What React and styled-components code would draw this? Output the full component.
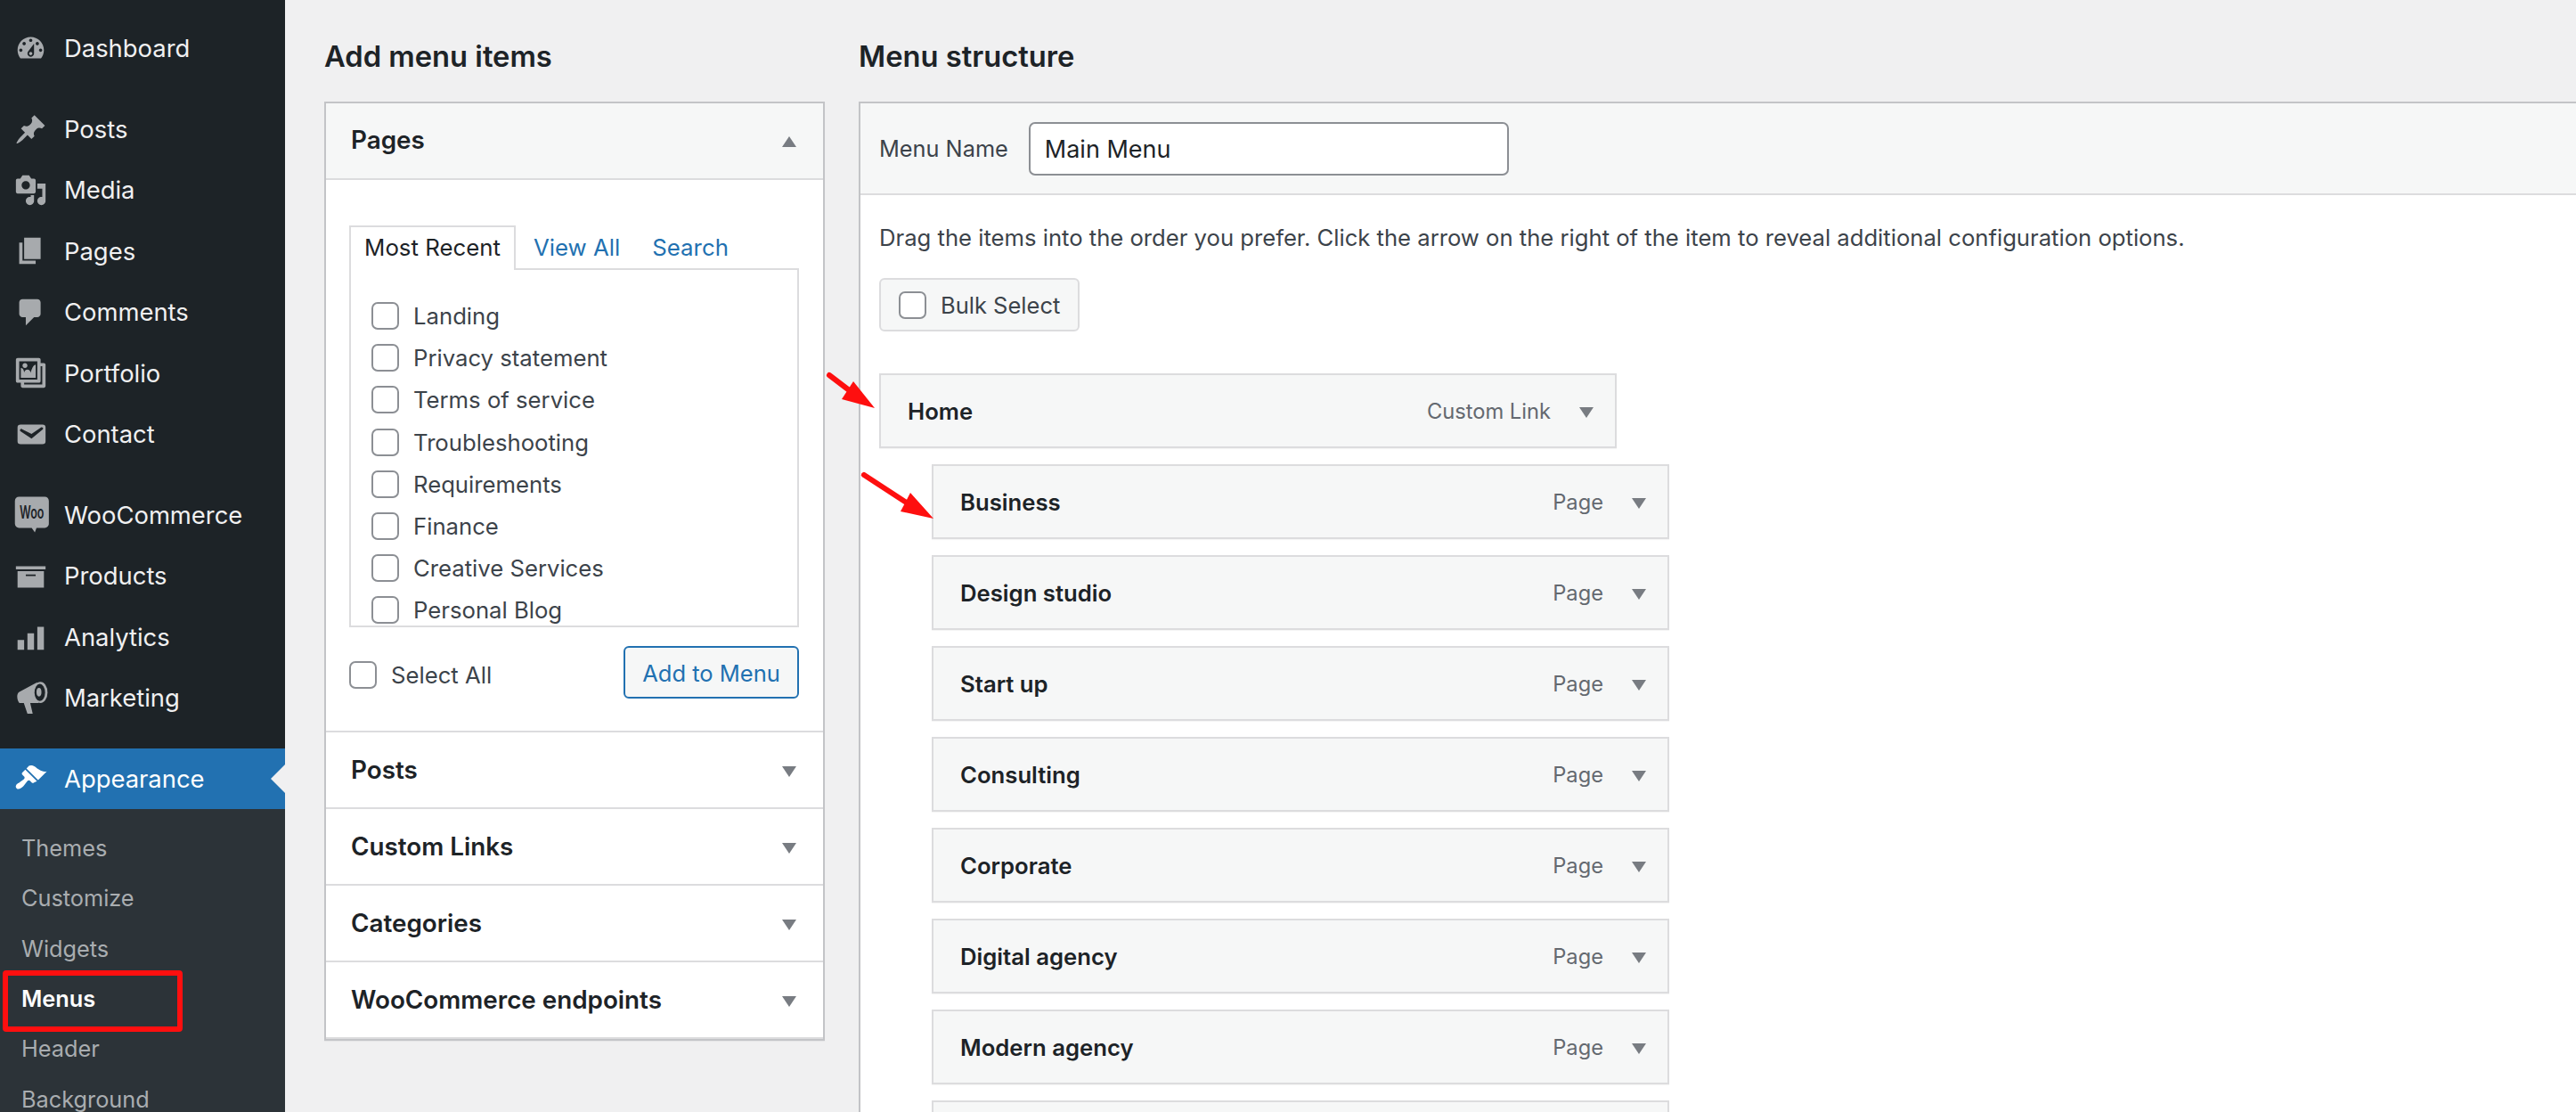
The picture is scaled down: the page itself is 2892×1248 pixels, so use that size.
import React from 'react';
import styled, { createGlobalStyle } from 'styled-components';

const GlobalStyle = createGlobalStyle`
  html, body {
    margin: 0;
    padding: 0;
    background: #f0f0f1;
  }
  body {
    font-family: Inter, 'Noto Sans', 'Liberation Sans', sans-serif;
    color: #3c434a;
  }
  * {
    box-sizing: border-box;
  }
`;

const Page = styled.div`
  display: flex;
  height: 1248px;
  overflow: hidden;
  position: relative;
`;

const Sidebar = styled.nav`
  background: #1d2327;
  flex: none;
  padding-top: 20px;
  width: 320px;
`;

const MenuGroup = styled.div`
  margin-bottom: 22.5px;
`;

const MenuItem = styled.div`
  align-items: center;
  background: ${props => (props.$active ? '#2271b1' : 'transparent')};
  color: ${props => (props.$active ? '#fff' : '#f0f0f1')};
  display: flex;
  font-size: 27.4px;
  gap: 19px;
  height: 68.4px;
  padding-left: 16px;
  position: relative;
`;

const Notch = styled.span`
  border-bottom: 16px solid transparent;
  border-right: 16px solid #f0f0f1;
  border-top: 16px solid transparent;
  position: absolute;
  right: 0;
  top: 18px;
`;

const IconSvg = styled.svg`
  fill: ${props => (props.$active ? '#fff' : '#a7aaad')};
  flex: none;
  height: 37px;
  overflow: visible;
  width: 37px;
`;

const WooLabel = styled.text`
  fill: #1d2327;
  font-family: Inter, sans-serif;
  font-size: 10.5px;
  font-weight: 600;
`;

const IconHole = styled.ellipse`
  fill: #1d2327;
`;

const SubMenu = styled.div`
  background: #2c3338;
  height: 400px;
  padding-top: 15px;
`;

const SubItem = styled.div`
  align-items: center;
  color: ${props => (props.$current ? '#fff' : '#a9adb0')};
  display: flex;
  font-size: 25.3px;
  font-weight: ${props => (props.$current ? 600 : 400)};
  height: 56.4px;
  padding-left: 24px;
`;

const Main = styled.main`
  display: flex;
  flex: 1;
  gap: 38px;
  min-width: 0;
  padding: 41px 0 0 44px;
`;

const LeftColumn = styled.section`
  flex: none;
  width: 562px;
`;

const RightColumn = styled.section`
  flex: 1;
  min-width: 0;
`;

const Heading = styled.h2`
  color: #1d2327;
  font-size: 32.7px;
  font-weight: 600;
  line-height: 44px;
  margin: 0 0 29px;
`;

const Panel = styled.div`
  background: #fff;
  border: 2px solid #c3c4c7;
  box-shadow: 0 1px 1px rgba(0, 0, 0, 0.04);
`;

const AccordionHead = styled.div`
  align-items: center;
  background: ${props => (props.$open ? '#f6f7f7' : '#fff')};
  border-bottom: 2px solid #dcdcde;
  color: #1d2327;
  display: flex;
  font-size: 27.8px;
  font-weight: 600;
  height: 86px;
  justify-content: space-between;
  padding: 0 30px ${props => (props.$open ? '2px' : '0')} 28px;
`;

const Triangle = styled.span`
  border-left: 8px solid transparent;
  border-right: 8px solid transparent;
  ${props => (props.$up ? 'border-bottom' : 'border-top')}: 12px solid #787c82;
  flex: none;
  height: 0;
  margin-top: ${props => (props.$up ? '3px' : '4px')};
  width: 0;
`;

const AccordionBody = styled.div`
  border-bottom: 2px solid #dcdcde;
  height: 620px;
  padding: 51px 27px 0 26px;
`;

const Tabs = styled.div`
  display: flex;
  height: 48px;
  position: relative;
  z-index: 1;
`;

const ActiveTab = styled.div`
  align-items: center;
  background: #fff;
  border: 2px solid #dcdcde;
  border-bottom: none;
  color: #1d2327;
  display: flex;
  font-size: 25.8px;
  height: 50px;
  justify-content: center;
  margin-right: 20px;
  padding-bottom: 3px;
  width: 187px;
`;

const TabLink = styled.a`
  align-items: center;
  color: #2271b1;
  display: flex;
  font-size: 25.8px;
  height: 48px;
  margin-right: 36px;
`;

const ListBox = styled.div`
  border: 2px solid #dcdcde;
  height: 403px;
  overflow: hidden;
  padding: 28px 0 0 23px;
`;

const Row = styled.label`
  align-items: center;
  display: flex;
  font-size: 25.7px;
  gap: 16px;
  height: 47.2px;
`;

const Check = styled.span`
  background: #fff;
  border: 2px solid #8c8f94;
  border-radius: 7px;
  display: block;
  flex: none;
  height: 31px;
  width: 31px;
`;

const Footer = styled.div`
  align-items: center;
  display: flex;
  justify-content: space-between;
  margin-top: 21px;
`;

const SelectAll = styled(Row)`
  padding-top: 6px;
`;

const AddButton = styled.button`
  background: #f6f7f7;
  border: 2px solid #2271b1;
  border-radius: 6px;
  color: #2271b1;
  font-family: inherit;
  font-size: 25.5px;
  height: 59px;
  padding: 2px 0 0;
  width: 197px;
`;

const StructurePanel = styled(Panel)`
  border-right: none;
  height: 1300px;
`;

const NameBar = styled.div`
  align-items: center;
  background: #f6f7f7;
  border-bottom: 2px solid #dcdcde;
  display: flex;
  font-size: 25.3px;
  gap: 23px;
  height: 103px;
  padding-left: 21px;
`;

const NameInput = styled.input`
  background: #fff;
  border: 2px solid #8c8f94;
  border-radius: 7px;
  color: #1d2327;
  font-family: inherit;
  font-size: 27px;
  height: 60px;
  padding: 2px 16px 0;
  width: 539px;
`;

const StructureBody = styled.div`
  padding: 31px 0 0 21px;
`;

const Hint = styled.p`
  font-size: 25.65px;
  line-height: 34px;
  margin: 0 0 28px;
`;

const BulkButton = styled.div`
  align-items: center;
  background: #f6f7f7;
  border: 2px solid #dcdcde;
  border-radius: 6px;
  display: flex;
  font-size: 25.5px;
  gap: 16px;
  height: 60px;
  margin-bottom: 47px;
  padding-left: 20px;
  width: 225px;
`;

const ItemBar = styled.div`
  align-items: center;
  background: #f6f7f7;
  border: 2px solid #dcdcde;
  box-shadow: 0 1px 1px rgba(0, 0, 0, 0.04);
  display: flex;
  height: 84px;
  margin-bottom: 18px;
  margin-left: ${props => (props.$depth ? '59px' : '0')};
  padding: 0 24px 0 30px;
  width: 828px;
`;

const ItemName = styled.span`
  color: #1d2327;
  flex: 1;
  font-size: 25.7px;
  font-weight: 600;
`;

const ItemType = styled.span`
  color: #646970;
  font-size: 23.7px;
  margin-right: 32px;
`;

const Annotation = styled.div`
  border: 6px solid #fe0f0f;
  border-radius: 4px;
  height: 69px;
  left: 3px;
  position: absolute;
  top: 1089px;
  width: 202px;
`;

const ArrowSvg = styled.svg`
  left: ${props => props.$left}px;
  position: absolute;
  top: ${props => props.$top}px;
`;

const Arrow = ({ left, top, width, height, from, to, head }) => (
  <ArrowSvg
    $left={left}
    $top={top}
    width={width}
    height={height}
    viewBox={`${left} ${top} ${width} ${height}`}
  >
    <line
      x1={from[0]}
      y1={from[1]}
      x2={to[0]}
      y2={to[1]}
      stroke="#fe0f0f"
      strokeWidth="6"
      strokeLinecap="round"
    />
    <polygon points={head} fill="#fe0f0f" />
  </ArrowSvg>
);

const Icon = ({ d, active, children }) => (
  <IconSvg viewBox="0 0 20 20" $active={active}>
    {d && <path d={d} fillRule="evenodd" />}
    {children}
  </IconSvg>
);

const MarketingIcon = () => (
  <Icon d="M1.8 8.9c0-1.2.5-2.2 1.3-2.7L13.9.45 14.8 13H9.7l1.5 6.4H8L5.8 13H3.1C2.3 12 1.8 10.5 1.8 8.9z">
    <ellipse cx="15.9" cy="6.6" rx="4.3" ry="6.4" />
    <IconHole cx="15.5" cy="6.6" rx="3.2" ry="5.2" />
    <ellipse cx="15" cy="6.4" rx="1.5" ry="2.6" />
  </Icon>
);

const icons = {
  dashboard:
    'M3.76 16h12.48c1.1-1.37 1.76-3.11 1.76-5 0-4.42-3.58-8-8-8s-8 3.58-8 8c0 1.89.66 3.63 1.76 5zM10 4c.55 0 1 .45 1 1s-.45 1-1 1-1-.45-1-1 .45-1 1-1zM6 6c.55 0 1 .45 1 1s-.45 1-1 1-1-.45-1-1 .45-1 1-1zm8 0c.55 0 1 .45 1 1s-.45 1-1 1-1-.45-1-1 .45-1 1-1zm-5.37 5.55L12 7v6c0 1.1-.9 2-2 2s-2-.9-2-2c0-.57.24-1.08.63-1.45zM4 10c.55 0 1 .45 1 1s-.45 1-1 1-1-.45-1-1 .45-1 1-1zm12 0c.55 0 1 .45 1 1s-.45 1-1 1-1-.45-1-1 .45-1 1-1zm-5 3c0-.55-.45-1-1-1s-1 .45-1 1 .45 1 1 1 1-.45 1-1z',
  posts:
    'M10.44 3.02l1.82-1.82 6.36 6.35-1.83 1.82c-1.05-.68-2.48-.57-3.41.36l-.75.75c-.92.93-1.04 2.35-.35 3.41l-1.83 1.82-2.41-2.41-2.8 2.79c-.42.42-3.38 2.71-3.8 2.29s1.86-3.39 2.28-3.81l2.79-2.79L4.1 9.36l1.83-1.82c1.05.69 2.48.57 3.4-.36l.75-.75c.93-.92 1.05-2.35.36-3.41z',
  media:
    'M13 11V4c0-.55-.45-1-1-1h-1.67L9 1H5L3.67 3H2c-.55 0-1 .45-1 1v7c0 .55.45 1 1 1h10c.55 0 1-.45 1-1zM7 4.5c1.38 0 2.5 1.12 2.5 2.5S8.38 9.5 7 9.5 4.5 8.38 4.5 7 5.62 4.5 7 4.5zM14 6h5v10.5c0 1.38-1.12 2.5-2.5 2.5S14 17.88 14 16.5s1.12-2.5 2.5-2.5c.17 0 .34.02.5.05V9h-3V6zm-4 8.05V13h2v3.5c0 1.38-1.12 2.5-2.5 2.5S7 17.88 7 16.5 8.12 14 9.5 14c.17 0 .34.02.5.05z',
  pages: 'M6 15V2h10v13H6zm-1 1h8v2H3V5h2v11z',
  comments:
    'M5 2h9c1.1 0 2 .9 2 2v7c0 1.1-.9 2-2 2h-2l-5 5v-5H5c-1.1 0-2-.9-2-2V4c0-1.1.9-2 2-2z',
  portfolio:
    'M16 4h1.96c.57 0 1.04.47 1.04 1.04v12.92c0 .57-.47 1.04-1.04 1.04H5.04C4.47 19 4 18.53 4 17.96V16H2.04C1.47 16 1 15.53 1 14.96V2.04C1 1.47 1.47 1 2.04 1h12.92c.57 0 1.04.47 1.04 1.04V4zM3 14h11V3H3v11zm5-8.5C8 4.67 7.33 4 6.5 4S5 4.67 5 5.5 5.67 7 6.5 7 8 6.33 8 5.5zm2 4.5s1-5 3-5v8H4V7c2 0 2 3 2 3s.33-2 2-2 2 2 2 2zm7 7V6h-1v8.96c0 .57-.47 1.04-1.04 1.04H6v1h11z',
  contact:
    'M3.87 4h13.25C18.37 4 19 4.59 19 5.79v8.42c0 1.19-.63 1.79-1.88 1.79H3.87c-1.25 0-1.88-.6-1.88-1.79V5.79c0-1.2.63-1.79 1.88-1.79zm6.62 8.6l6.74-5.53c.24-.2.43-.66.13-1.07-.29-.41-.82-.42-1.17-.17l-5.7 3.86L4.8 6.83c-.35-.25-.88-.24-1.17.17-.3.41-.11.87.13 1.07z',
  woo:
    'M2.9-.8h15.6c1.4 0 2.5 1.1 2.5 2.5v13.9c0 1.4-1.1 2.5-2.5 2.5h-5l-1 2.7-1.9-2.7H2.9c-1.4 0-2.5-1.1-2.5-2.5V1.7c0-1.4 1.1-2.5 2.5-2.5z',
  products: 'M19 4v2H1V4h18zM2 7h16v10H2V7zm11 3V9H7v1h6z',
  analytics: 'M18 18V4h-4v14h4zm-6 0V8H8v10h4zm-6 0v-6H2v6h4z',
  appearance:
    'M14.48 11.06L7.41 3.99l1.5-1.5c.5-.56 2.3-.47 3.51.32 1.21.8 1.43 1.28 2.91 2.1 1.18.64 2.45 1.26 4.45.85zm-.71.71L6.7 4.7 4.93 6.47c-.39.39-.39 1.02 0 1.41l1.06 1.06c.39.39.39 1.03 0 1.42-.6.6-1.43 1.11-2.21 1.69-.35.26-.7.53-1.01.84C1.43 13.23.28 14.96 1.4 16.08c1.11 1.12 2.84-.03 4.18-1.36.31-.31.58-.66.85-1.02.57-.78 1.08-1.61 1.69-2.21.39-.39 1.02-.39 1.41 0l1.06 1.06c.39.39 1.02.39 1.41 0z',
};

const contentMenu = [
  ['Posts', icons.posts],
  ['Media', icons.media],
  ['Pages', icons.pages],
  ['Comments', icons.comments],
  ['Portfolio', icons.portfolio],
  ['Contact', icons.contact],
];

const shopMenu = [
  ['Products', icons.products],
  ['Analytics', icons.analytics],
];

const subMenu = ['Themes', 'Customize', 'Widgets', 'Menus', 'Header', 'Background'];

const pages = [
  'Landing',
  'Privacy statement',
  'Terms of service',
  'Troubleshooting',
  'Requirements',
  'Finance',
  'Creative Services',
  'Personal Blog',
];

const closedSections = ['Posts', 'Custom Links', 'Categories', 'WooCommerce endpoints'];

const menuItems = [
  'Business',
  'Design studio',
  'Start up',
  'Consulting',
  'Corporate',
  'Digital agency',
  'Modern agency',
];

export default function App() {
  return (
    <Page>
      <GlobalStyle />
      <Sidebar>
        <MenuGroup>
          <MenuItem>
            <Icon d={icons.dashboard} />
            Dashboard
          </MenuItem>
        </MenuGroup>
        <MenuGroup>
          {contentMenu.map(([label, d]) => (
            <MenuItem key={label}>
              <Icon d={d} />
              {label}
            </MenuItem>
          ))}
        </MenuGroup>
        <MenuGroup>
          <MenuItem>
            <Icon d={icons.woo}>
              <WooLabel x="3.3" y="12.6" textLength="14.8" lengthAdjust="spacingAndGlyphs">
                Woo
              </WooLabel>
            </Icon>
            WooCommerce
          </MenuItem>
          {shopMenu.map(([label, d]) => (
            <MenuItem key={label}>
              <Icon d={d} />
              {label}
            </MenuItem>
          ))}
          <MenuItem>
            <MarketingIcon />
            Marketing
          </MenuItem>
        </MenuGroup>
        <MenuItem $active>
          <Icon d={icons.appearance} active />
          Appearance
          <Notch />
        </MenuItem>
        <SubMenu>
          {subMenu.map(label => (
            <SubItem key={label} $current={label === 'Menus'}>
              {label}
            </SubItem>
          ))}
        </SubMenu>
      </Sidebar>

      <Main>
        <LeftColumn>
          <Heading>Add menu items</Heading>
          <Panel>
            <AccordionHead $open>
              Pages
              <Triangle $up />
            </AccordionHead>
            <AccordionBody>
              <Tabs>
                <ActiveTab>Most Recent</ActiveTab>
                <TabLink>View All</TabLink>
                <TabLink>Search</TabLink>
              </Tabs>
              <ListBox>
                {pages.map(page => (
                  <Row key={page}>
                    <Check />
                    {page}
                  </Row>
                ))}
              </ListBox>
              <Footer>
                <SelectAll>
                  <Check />
                  Select All
                </SelectAll>
                <AddButton>Add to Menu</AddButton>
              </Footer>
            </AccordionBody>
            {closedSections.map(section => (
              <AccordionHead key={section}>
                {section}
                <Triangle />
              </AccordionHead>
            ))}
          </Panel>
        </LeftColumn>

        <RightColumn>
          <Heading>Menu structure</Heading>
          <StructurePanel>
            <NameBar>
              Menu Name
              <NameInput defaultValue="Main Menu" />
            </NameBar>
            <StructureBody>
              <Hint>
                Drag the items into the order you prefer. Click the arrow on the right of the item to
                reveal additional configuration options.
              </Hint>
              <BulkButton>
                <Check />
                Bulk Select
              </BulkButton>
              <ItemBar>
                <ItemName>Home</ItemName>
                <ItemType>Custom Link</ItemType>
                <Triangle />
              </ItemBar>
              {menuItems.map(item => (
                <ItemBar key={item} $depth>
                  <ItemName>{item}</ItemName>
                  <ItemType>Page</ItemType>
                  <Triangle />
                </ItemBar>
              ))}
              <ItemBar $depth />
            </StructureBody>
          </StructurePanel>
        </RightColumn>
      </Main>

      <Annotation />
      <Arrow
        left={925}
        top={416}
        width={60}
        height={46}
        from={[931, 421]}
        to={[952, 437]}
        head="958,428 945,448 982,458"
      />
      <Arrow
        left={964}
        top={528}
        width={88}
        height={58}
        from={[970, 533]}
        to={[1016, 563]}
        head="1022,553 1011,574 1048,582"
      />
    </Page>
  );
}
